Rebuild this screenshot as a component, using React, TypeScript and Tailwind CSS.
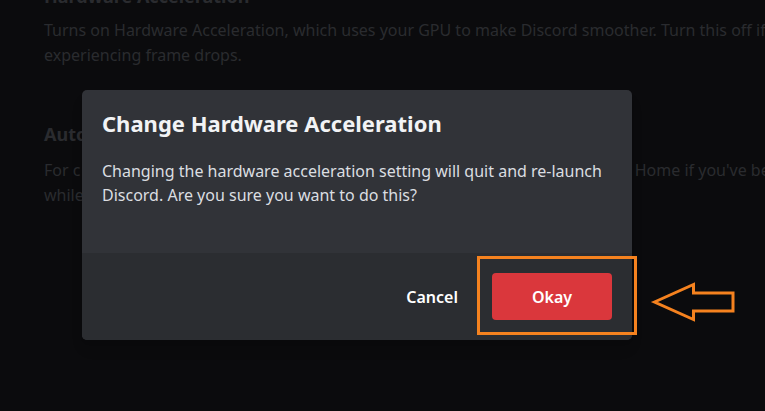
export default function App() {
  return (
    <div
      className="relative h-[411px] w-[765px] overflow-hidden bg-[#0b0b0d]"
      style={{ fontFamily: '"Noto Sans", "Open Sans", sans-serif' }}
    >
      {/* settings page behind the overlay */}
      <div className="-mt-[16px] pl-[44px] text-[#2a2b2f] whitespace-nowrap">
        <div className="text-[18px] font-bold leading-[24px]">Hardware Acceleration</div>
        <p className="mt-[10px] text-[16px] leading-[25px]">
          Turns on Hardware Acceleration, which uses your GPU to make Discord smoother. Turn this off if y
          <br />
          experiencing frame drops.
        </p>
        <div className="mt-[54px] text-[18px] font-bold leading-[24px]">Auto</div>
        <div className="mt-[12px] flex text-[16px] leading-[25px]">
          <div>
            For c
            <br />
            while
          </div>
          <div className="ml-[551px]">Home if you've be</div>
        </div>
      </div>

      {/* modal */}
      <div className="absolute left-[82px] top-[90px] w-[550px] h-[250px] flex flex-col rounded-[5px] overflow-hidden bg-[#313338] shadow-lg">
        <div className="flex-1 px-[20px] pt-[18px]">
          <h2 className="text-[22px] font-bold leading-[30px] text-[#f2f3f5]">Change Hardware Acceleration</h2>
          <p className="mt-[21px] text-[16px] leading-[24px] text-[#dbdee1]">
            Changing the hardware acceleration setting will quit and re-launch Discord. Are you sure you want to do this?
          </p>
        </div>
        <div className="h-[87px] bg-[#2b2d31] flex items-center justify-end gap-[34px] pr-[20px]">
          <span className="text-[16px] font-semibold text-white">Cancel</span>
          <button className="w-[120px] h-[47px] rounded-[4px] bg-[#da373c] text-[16px] font-semibold text-white">
            Okay
          </button>
        </div>
      </div>

      {/* annotation box */}
      <div className="absolute left-[477px] top-[256px] w-[160px] h-[79px] border-[3px] border-[#f5821f]" />

      {/* annotation arrow */}
      <svg className="absolute left-[650px] top-[280px]" width="90" height="44" viewBox="0 0 90 44">
        <path
          d="M4.5 22 L43.5 4.5 L43.5 13 L83 13 L83 31 L43.5 31 L43.5 39.5 Z"
          fill="none"
          stroke="#f5821f"
          strokeWidth="3"
          strokeLinejoin="miter"
        />
      </svg>
    </div>
  );
}
